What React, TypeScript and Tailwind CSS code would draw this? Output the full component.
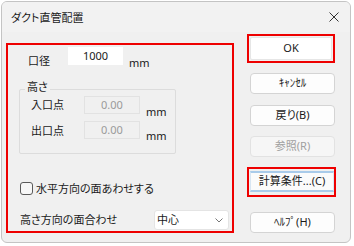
import React from "react";

const font = "[font-family:'Noto_Sans','Noto_Sans_CJK_JP',sans-serif] [font-feature-settings:'palt']";

function Btn({ children, disabled }: { children: React.ReactNode; disabled?: boolean }) {
  return (
    <div
      className={`w-[85px] h-[21px] ml-[3px] flex items-center justify-center rounded-[4px] border text-[11px] ${
        disabled ? "border-[#e2e2e2] bg-[#f6f6f6] text-[#a0a0a0]" : "border-[#d4d4d4] bg-[#fdfdfd] text-[#1a1a1a]"
      }`}
    >
      {children}
    </div>
  );
}

export default function App() {
  return (
    <div className={`w-[354px] h-[246px] bg-white pl-[1px] pt-[1px] ${font}`}>
      <div className="w-[350px] h-[242px] rounded-[6px] border border-[#c4c4c4] bg-[#f0f0f0] overflow-hidden flex flex-col">
        {/* title bar */}
        <div className="h-[30px] shrink-0 flex items-center justify-between pl-[9px] pr-[8px] bg-[#f2f2f2]">
          <span className="text-[11px] text-[#1a1a1a] mt-[2px]">ダクト直管配置</span>
          <svg width="10" height="10" viewBox="0 0 10 10" className="mr-[3px] mt-[-1px]">
            <path d="M0.5 0.5 L9.5 9.5 M9.5 0.5 L0.5 9.5" stroke="#333" strokeWidth="1" />
          </svg>
        </div>
        {/* body */}
        <div className="flex flex-row items-start">
          {/* left panel */}
          <div className="ml-[4px] mt-[11px] w-[228px] h-[190px] border-2 border-[#ee0000] pl-[11px] pt-[2px] text-[11px] text-[#1a1a1a]">
            <div className="flex items-start">
              <span className="ml-[9px] w-[40px] mt-[7px] leading-[14px]">口径</span>
              <div className="w-[55px] h-[18px] bg-white flex items-center justify-center leading-[14px]">1000</div>
              <span className="ml-[6px] mt-[9px] leading-[14px]">mm</span>
            </div>
            <div className="relative mt-[19px] w-[157px] h-[65px] border border-[#dcdcdc] rounded-[2px] pt-[6px]">
              <span className="absolute -top-[10px] left-[5px] px-[2px] bg-[#f0f0f0] leading-[14px]">高さ</span>
              <div className="flex items-start">
                <span className="ml-[11px] w-[53px] mt-[2px] leading-[14px]">入口点</span>
                <div className="w-[56px] h-[18px] bg-[#f0f0f0] border border-[#e2e2e2] flex items-center justify-center text-[#9a9a9a] leading-[14px]">0.00</div>
                <span className="ml-[6px] mt-[9px] leading-[14px]">mm</span>
              </div>
              <div className="flex items-start mt-[2px]">
                <span className="ml-[11px] w-[53px] mt-[3px] leading-[14px]">出口点</span>
                <div className="w-[56px] h-[18px] bg-[#f0f0f0] border border-[#e2e2e2] flex items-center justify-center text-[#9a9a9a] leading-[14px]">0.00</div>
                <span className="ml-[6px] mt-[8px] leading-[14px]">mm</span>
              </div>
            </div>
            <div className="flex items-center mt-[28px] ml-[1px] h-[13px]">
              <div className="w-[13px] h-[13px] rounded-[3px] border border-[#5a5a5a] bg-[#f7f7f7]" />
              <span className="ml-[3px] leading-[14px]">水平方向の面あわせする</span>
            </div>
            <div className="flex items-center justify-between mt-[15px] ml-[1px] w-[209px]">
              <span className="leading-[14px]">高さ方向の面合わせ</span>
              <div className="w-[75px] h-[20px] bg-white border border-[#e4e4e4] rounded-[3px] flex items-center justify-between pl-[2px] pr-[5px]">
                <span className="leading-[14px]">中心</span>
                <svg width="8" height="5" viewBox="0 0 8 5">
                  <path d="M0.5 0.5 L4 4 L7.5 0.5" stroke="#777" strokeWidth="1" fill="none" />
                </svg>
              </div>
            </div>
          </div>
          {/* right column */}
          <div className="ml-[13px] mt-[2px] flex flex-col">
            <div className="w-[88px] h-[29px] border-2 border-[#ee0000] p-[1px]">
              <div className="w-full h-full bg-white border border-[#e6e6e6] rounded-[2px] flex items-center justify-center text-[11px] text-[#1a1a1a]">OK</div>
            </div>
            <div className="mt-[10px]"><Btn>ｷｬﾝｾﾙ</Btn></div>
            <div className="mt-[11px]"><Btn>戻り(B)</Btn></div>
            <div className="mt-[10px]"><Btn disabled>参照(R)</Btn></div>
            <div className="mt-[10px] w-[89px] h-[30px] border-2 border-[#ee0000] pt-[2px] pl-[1px]">
              <div className="w-[84px] h-[21px] bg-[#fbfbfb] border-y-2 border-x border-y-[#a9cbea] border-x-[#d8e6f3] flex items-center justify-center text-[11px] text-[#1a1a1a]">計算条件...(C)</div>
            </div>
            <div className="mt-[15px]"><Btn>ﾍﾙﾌﾟ(H)</Btn></div>
          </div>
        </div>
      </div>
    </div>
  );
}
